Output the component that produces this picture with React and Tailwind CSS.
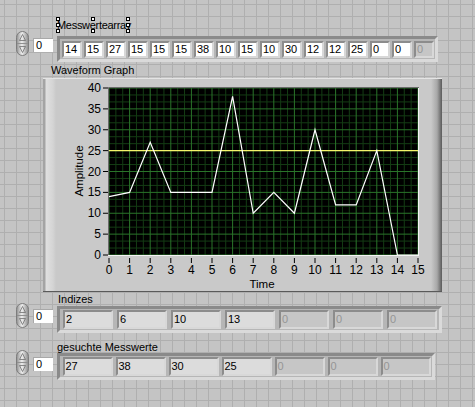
import React from 'react';

const messwerte = [14, 15, 27, 15, 15, 15, 38, 10, 15, 10, 30, 12, 12, 25, 0, 0];
const indizes = [2, 6, 10, 13];
const gesucht = [27, 38, 30, 25];

const font = { fontFamily: '"Liberation Sans", Arial, sans-serif' };

function Rocker({ className }) {
  return (
    <svg width="13" height="25" viewBox="0 0 13 25" className={className}>
      <defs>
        <linearGradient id="rk" x1="0" x2="1" y1="0" y2="0">
          <stop offset="0" stopColor="#8e8e8e" />
          <stop offset="0.45" stopColor="#eeeeee" />
          <stop offset="1" stopColor="#8a8a8a" />
        </linearGradient>
      </defs>
      <rect x="0.5" y="0.5" width="12" height="24" rx="6" fill="url(#rk)" stroke="#7c7c7c" />
      <line x1="1" y1="12.5" x2="12" y2="12.5" stroke="#909090" />
      <path d="M6.5 3.5 L9.5 9.5 L3.5 9.5 Z" fill="none" stroke="#707070" strokeWidth="0.8" />
      <path d="M6.5 21.5 L9.5 15.5 L3.5 15.5 Z" fill="none" stroke="#707070" strokeWidth="0.8" />
    </svg>
  );
}

function IndexBox({ className }) {
  return (
    <div className={'w-[20px] h-[14px] bg-white border-t border-l border-t-[#a8a8a8] border-l-[#a8a8a8] text-[11px] leading-[13px] pl-[2px] text-black ' + className}>
      0
    </div>
  );
}

function SmallCell({ v, off }) {
  return (
    <div className="w-[22px] h-[20px] flex items-center justify-center">
      <div className="border-2 border-t-[#8c8c8c] border-l-[#8c8c8c] border-b-[#d8d8d8] border-r-[#d8d8d8]">
        <div className={off ? 'w-[16px] h-[13px] text-[11px] leading-[13px] pl-[1px] bg-[#c6c6c6] text-[#959595]' : 'w-[16px] h-[13px] text-[11px] leading-[13px] pl-[1px] bg-white text-black'}>
          {v}
        </div>
      </div>
    </div>
  );
}

function WideCell({ v, off, w }) {
  return (
    <div className={w === 53 ? 'w-[53px] h-[21px] flex items-center justify-center' : 'w-[54px] h-[21px] flex items-center justify-center'}>
      <div className="border-2 border-t-[#8c8c8c] border-l-[#8c8c8c] border-b-[#d8d8d8] border-r-[#d8d8d8]">
        <div className={off ? 'w-[46px] h-[15px] text-[11px] leading-[15px] pl-[1px] bg-[#c6c6c6] text-[#959595]' : 'w-[46px] h-[15px] text-[11px] leading-[15px] pl-[1px] bg-[#dcdcdc] text-black'}>
          {v}
        </div>
      </div>
    </div>
  );
}

function Handle({ className }) {
  return <div className={'absolute w-[4px] h-[4px] bg-white border border-black ' + className} />;
}

function Graph() {
  const px = (t) => 66 + (t * 309) / 15;
  const py = (v) => 176 - (v * 167) / 40;
  const minorX = [];
  const majorX = [];
  for (let t = 0; t <= 15; t++) {
    majorX.push(px(t));
    if (t < 15) {
      minorX.push(px(t + 1 / 3), px(t + 2 / 3));
    }
  }
  const minorY = [];
  const majorY = [];
  for (let v = 0; v <= 40; v += 5) {
    majorY.push(py(v));
    if (v < 40) minorY.push(py(v + 5 / 3), py(v + 10 / 3));
  }
  const pts = messwerte.map((v, i) => `${px(i)},${py(v)}`).join(' ');

  return (
    <svg width="399" height="213" viewBox="0 0 399 213" className="block">
      <rect x="66" y="9" width="309" height="167" fill="#000" />
      {minorX.map((x, i) => (
        <line key={'mx' + i} x1={x} x2={x} y1="9" y2="176" stroke="#143c14" strokeWidth="1" />
      ))}
      {minorY.map((y, i) => (
        <line key={'my' + i} x1="66" x2="375" y1={y} y2={y} stroke="#143c14" strokeWidth="1" />
      ))}
      {majorX.map((x, i) => (
        <line key={'Mx' + i} x1={x} x2={x} y1="9" y2="176" stroke="#2a742a" strokeWidth="1" />
      ))}
      {majorY.map((y, i) => (
        <line key={'My' + i} x1="66" x2="375" y1={y} y2={y} stroke="#2a742a" strokeWidth="1" />
      ))}
      <line x1="66" x2="375" y1={py(25)} y2={py(25)} stroke="#f4f46a" strokeWidth="1.2" />
      <polyline points={pts} fill="none" stroke="#ffffff" strokeWidth="1.2" />
      <line x1="65.5" y1="176" x2="65.5" y2="8.5" stroke="#6a6a6a" />
      <line x1="65.5" y1="8.5" x2="376" y2="8.5" stroke="#6a6a6a" />
      <line x1="375.5" y1="9" x2="375.5" y2="176.5" stroke="#f4f4f4" />
      <line x1="65" y1="176.5" x2="376" y2="176.5" stroke="#f4f4f4" />
      {[0, 5, 10, 15, 20, 25, 30, 35, 40].map((v) => (
        <g key={'yt' + v}>
          <line x1="60" x2="65" y1={py(v)} y2={py(v)} stroke="#000" />
          <text x="58" y={py(v) + 4} textAnchor="end" fontSize="12" fill="#000" style={font}>
            {v}
          </text>
        </g>
      ))}
      {Array.from({ length: 16 }, (_, t) => (
        <g key={'xt' + t}>
          <line x1={px(t)} x2={px(t)} y1="179" y2="184" stroke="#000" />
          <text x={px(t)} y="195" textAnchor="middle" fontSize="12" fill="#000" style={font}>
            {t}
          </text>
        </g>
      ))}
      <text x="219" y="209" textAnchor="middle" fontSize="11.5" fill="#000" style={font}>
        Time
      </text>
      <text x="0" y="0" textAnchor="middle" fontSize="11.5" fill="#000" style={font} transform="translate(40 92) rotate(-90)">
        Amplitude
      </text>
    </svg>
  );
}

export default function App() {
  return (
    <div
      className="relative w-[475px] h-[407px] overflow-hidden bg-[#c4c4c4] [background-image:linear-gradient(to_right,#afafaf_1px,transparent_1px),linear-gradient(to_bottom,#afafaf_1px,transparent_1px)] [background-size:12px_12px] [background-position:4px_4px] text-black flex flex-col"
      style={font}
    >
      {/* Messwertearray label with selection handles */}
      <div className="ml-[57px] mt-[19px] h-[12px] w-[72px] relative">
        <div className="text-[11px] leading-[12px] tracking-[-0.3px] whitespace-nowrap">Messwertearray</div>
        <Handle className="left-[-1px] top-[-2px]" />
        <Handle className="left-[-1px] top-[4px]" />
        <Handle className="left-[-1px] top-[10px]" />
        <Handle className="left-[34px] top-[-2px]" />
        <Handle className="left-[34px] top-[10px]" />
        <Handle className="left-[69px] top-[-2px]" />
        <Handle className="left-[69px] top-[4px]" />
        <Handle className="left-[69px] top-[10px]" />
      </div>

      {/* array control */}
      <div className="flex items-start h-[31px]">
        <Rocker className="ml-[16px] shrink-0" />
        <IndexBox className="ml-[4px] mt-[7px] shrink-0" />
        <div className="ml-[4px] mt-[5px] border-[3px] border-t-[#8a8a8a] border-l-[#8a8a8a] border-r-[#dadada] border-b-[#dadada] bg-[#b6b6b6] flex pl-[1px]">
          {messwerte.map((v, i) => (
            <SmallCell key={i} v={v} />
          ))}
          <SmallCell v={0} off />
        </div>
      </div>

      <div className="ml-[51px] mt-[2px] h-[12px] text-[11px] leading-[12px]">Waveform Graph</div>

      {/* graph frame */}
      <div className="ml-[43px] mt-[2px] w-[399px] h-[214px] border-t border-t-[#e4e4e4] border-b border-b-[#5a5a5a] [background-image:linear-gradient(to_right,#a4a4a4_0px,#a4a4a4_2px,#e0e0e0_3px,#d4d4d4_10px,#c9c9c9_13px,#c9c9c9_388px,#a8a8a8_394px,#5a5a5a_399px)]">
        <Graph />
      </div>

      <div className="ml-[58px] mt-[1px] h-[12px] text-[11px] leading-[12px]">Indizes</div>

      <div className="flex items-start h-[28px]">
        <Rocker className="ml-[16px] mt-[-2px] shrink-0" />
        <IndexBox className="ml-[4px] mt-[4px] shrink-0" />
        <div className="ml-[4px] mt-[1px] border-[3px] border-t-[#8a8a8a] border-l-[#8a8a8a] border-r-[#dadada] border-b-[#dadada] bg-[#b6b6b6] flex pl-[1px]">
          {indizes.map((v, i) => (
            <WideCell key={i} v={v} />
          ))}
          {[0, 0, 0].map((v, i) => (
            <WideCell key={'o' + i} v={v} off />
          ))}
        </div>
      </div>

      <div className="ml-[57px] mt-[8px] h-[12px] text-[11px] leading-[12px]">gesuchte Messwerte</div>

      <div className="flex items-start h-[30px]">
        <Rocker className="ml-[16px] mt-[-3px] shrink-0" />
        <IndexBox className="ml-[4px] mt-[4px] shrink-0" />
        <div className="ml-[4px] border-[3px] border-t-[#8a8a8a] border-l-[#8a8a8a] border-r-[#dadada] border-b-[#dadada] bg-[#b6b6b6] flex pl-[1px]">
          {gesucht.map((v, i) => (
            <WideCell key={i} v={v} w={53} />
          ))}
          {[0, 0, 0].map((v, i) => (
            <WideCell key={'o' + i} v={v} off w={53} />
          ))}
        </div>
      </div>
    </div>
  );
}
